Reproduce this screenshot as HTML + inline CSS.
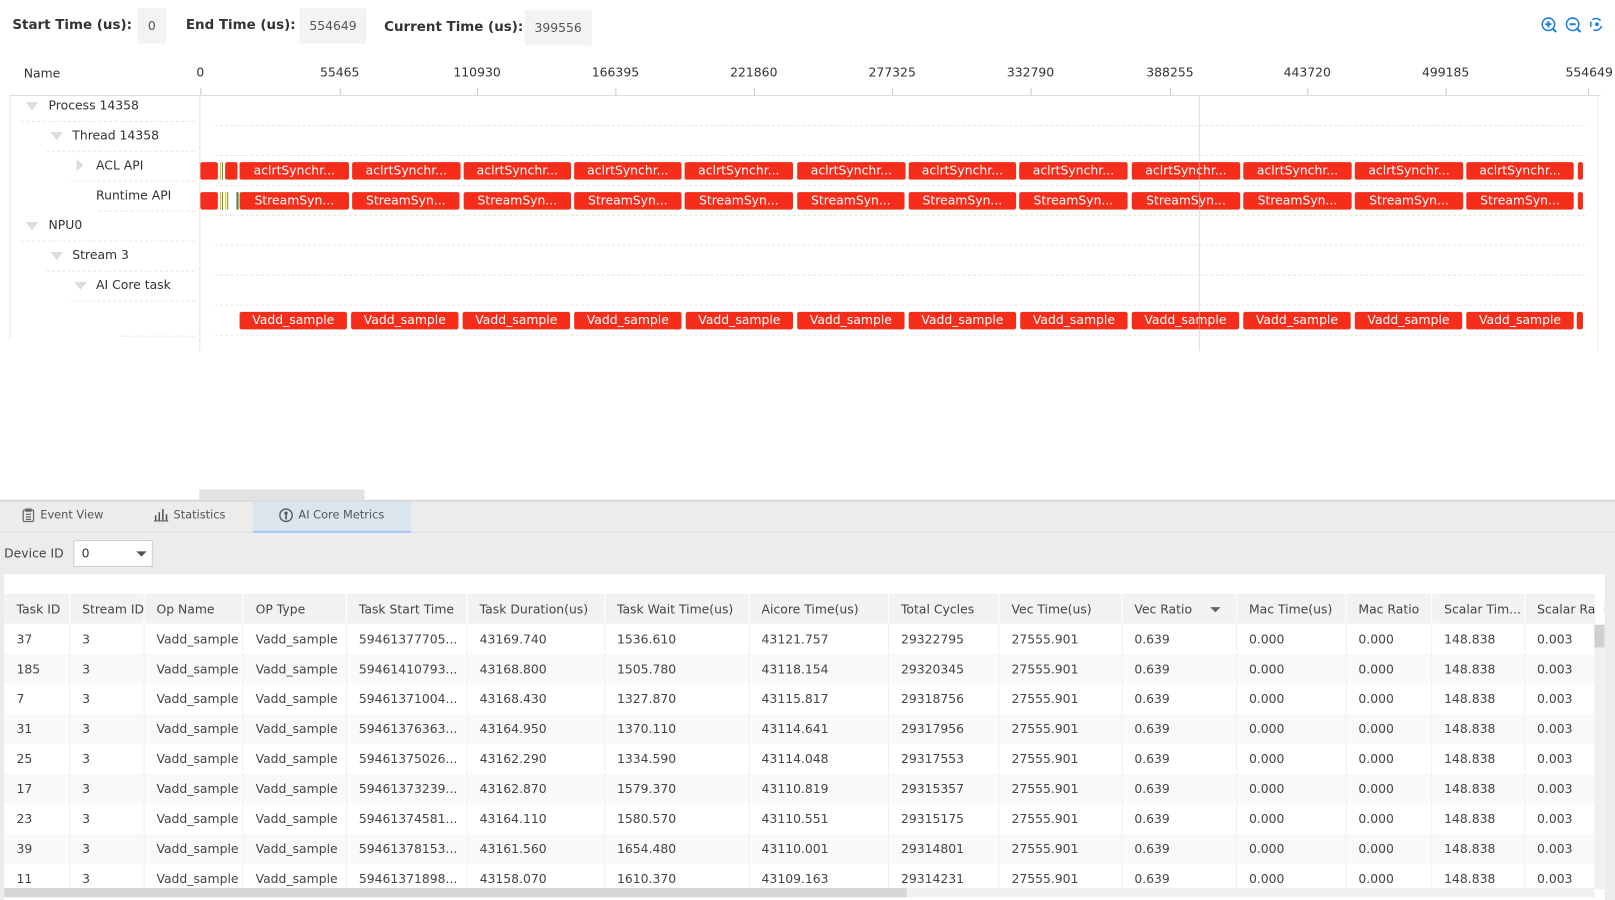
<!DOCTYPE html>
<html><head><meta charset="utf-8"><style>
*{margin:0;padding:0;box-sizing:border-box}
html,body{width:1615px;height:900px;overflow:hidden;background:#fff}
#r{position:absolute;left:0;top:0;width:1564px;height:872px;transform:scale(1.03261);transform-origin:0 0;font-family:"DejaVu Sans","Liberation Sans",sans-serif;color:#333}
.a{position:absolute}
.lb{font-weight:bold;font-size:13px;color:#333;top:17px}
.bx{background:#f3f3f3;font-size:12px;color:#555;text-align:center;line-height:34px;height:34px}
.tk{font-size:12px;color:#333;top:63px;transform:translateX(-50%)}
.tm{width:1px;height:7px;background:#ccc;top:85px}
.tr{font-size:12px;color:#333}
.tri{width:0;height:0;border-left:6px solid transparent;border-right:6px solid transparent;border-top:8px solid #ddd}
.ds{height:0;border-top:1px dashed #e6e6e6}
.b{background:#f52d1b;height:17px;border-radius:2px;color:#fff;font-size:12px;line-height:17px;text-align:center;overflow:hidden;white-space:nowrap}
.g{width:1px;height:17px}
table{border-collapse:collapse;table-layout:fixed;font-size:12px;color:#444}
td,th{height:29px;padding-left:12px;white-space:nowrap;overflow:hidden;text-align:left;font-weight:normal}
th{background:#f2f2f2;border-right:1px solid #fff;color:#444}
td{border-right:1px solid #f0f0f0}
tr:nth-child(odd) td{background:#f9f9f9}
</style></head><body><div id="r">
<div class="a lb" style="left:12px">Start Time (us):</div>
<div class="a bx" style="left:133px;top:8px;width:28px">0</div>
<div class="a lb" style="left:180px">End Time (us):</div>
<div class="a bx" style="left:290px;top:8px;width:65px">554649</div>
<div class="a lb" style="left:372px;top:19px">Current Time (us):</div>
<div class="a bx" style="left:508px;top:10px;width:65px">399556</div>
<svg class="a" style="left:1492px;top:16px" width="64" height="17" viewBox="0 0 64 17" fill="none" stroke="#1a7fe0" stroke-width="1.5">
<circle cx="7.5" cy="7.5" r="6"/><path d="M12 12l3 3M4.5 7.5h6M7.5 4.5v6" stroke-width="2"/>
<circle cx="31" cy="7.5" r="6"/><path d="M35.5 12l3 3M28 7.5h6" stroke-width="2"/>
<path d="M50 3a6 6 0 0 1 8 1M59 9a6 6 0 0 1-8 4M49 10a6 6 0 0 1 0-5"/><circle cx="54.5" cy="7.5" r="1.8" fill="#1a7fe0" stroke="none"/>
</svg>
<div class="a" style="left:23px;top:64px;font-size:12px">Name</div>
<div class="a tk" style="left:194px">0</div><div class="a tk" style="left:329px">55465</div><div class="a tk" style="left:462px">110930</div><div class="a tk" style="left:596px">166395</div><div class="a tk" style="left:730px">221860</div><div class="a tk" style="left:864px">277325</div><div class="a tk" style="left:998px">332790</div><div class="a tk" style="left:1133px">388255</div><div class="a tk" style="left:1266px">443720</div><div class="a tk" style="left:1400px">499185</div><div class="a tk" style="left:1539px">554649</div>
<div class="a tm" style="left:194px"></div><div class="a tm" style="left:329px"></div><div class="a tm" style="left:462px"></div><div class="a tm" style="left:596px"></div><div class="a tm" style="left:730px"></div><div class="a tm" style="left:864px"></div><div class="a tm" style="left:998px"></div><div class="a tm" style="left:1133px"></div><div class="a tm" style="left:1266px"></div><div class="a tm" style="left:1400px"></div><div class="a tm" style="left:1538px"></div>
<div class="a" style="left:9px;top:92px;width:1541px;height:1px;background:#ddd"></div>
<div class="a" style="left:9px;top:92px;width:1px;height:237px;background:#e6e6e6"></div>
<div class="a" style="left:193px;top:92px;width:1px;height:248px;background:#e6e6e6"></div>
<div class="a" style="left:1547px;top:93px;width:1px;height:247px;background:#eee"></div>
<div class="a tri" style="left:25px;top:99px"></div><div class="a tr" style="left:47px;top:95px">Process 14358</div>
<div class="a tri" style="left:49px;top:128px"></div><div class="a tr" style="left:70px;top:124px">Thread 14358</div>
<div class="a" style="left:74px;top:154px;width:0;height:0;border-top:6px solid transparent;border-bottom:6px solid transparent;border-left:7px solid #ddd"></div><div class="a tr" style="left:93px;top:153px">ACL API</div>
<div class="a tr" style="left:93px;top:182px">Runtime API</div>
<div class="a tri" style="left:25px;top:215px"></div><div class="a tr" style="left:47px;top:211px">NPU0</div>
<div class="a tri" style="left:49px;top:244px"></div><div class="a tr" style="left:70px;top:240px">Stream 3</div>
<div class="a tri" style="left:72px;top:273px"></div><div class="a tr" style="left:93px;top:269px">AI Core task</div>
<div class="a ds" style="left:208px;top:121px;width:1327px"></div>
<div class="a ds" style="left:208px;top:150px;width:1327px"></div>
<div class="a ds" style="left:208px;top:179px;width:1327px"></div>
<div class="a ds" style="left:208px;top:208px;width:1327px"></div>
<div class="a ds" style="left:208px;top:237px;width:1327px"></div>
<div class="a ds" style="left:208px;top:266px;width:1327px"></div>
<div class="a ds" style="left:208px;top:295px;width:1327px"></div>
<div class="a ds" style="left:208px;top:324px;width:1327px"></div>
<div class="a ds" style="left:21px;top:117px;width:167px"></div>
<div class="a ds" style="left:45px;top:146px;width:143px"></div>
<div class="a ds" style="left:69px;top:175px;width:120px"></div>
<div class="a ds" style="left:96px;top:204px;width:93px"></div>
<div class="a ds" style="left:21px;top:233px;width:167px"></div>
<div class="a ds" style="left:45px;top:262px;width:143px"></div>
<div class="a ds" style="left:69px;top:291px;width:120px"></div>
<div class="a ds" style="left:116px;top:325px;width:73px"></div>
<div class="a" style="left:0;top:157px">
<div class="a b" style="left:194px;width:17px"></div>
<div class="a g" style="left:213px;background:#e8c010"></div><div class="a g" style="left:215px;background:#6a9a20"></div>
<div class="a b" style="left:218px;width:12px"></div>
<div class="a b" style="left:232px;width:106px">aclrtSynchr...</div>
<div class="a b" style="left:341px;width:105px">aclrtSynchr...</div>
<div class="a b" style="left:449px;width:104px">aclrtSynchr...</div>
<div class="a b" style="left:556px;width:104px">aclrtSynchr...</div>
<div class="a b" style="left:663px;width:105px">aclrtSynchr...</div>
<div class="a b" style="left:772px;width:105px">aclrtSynchr...</div>
<div class="a b" style="left:880px;width:104px">aclrtSynchr...</div>
<div class="a b" style="left:987px;width:105px">aclrtSynchr...</div>
<div class="a b" style="left:1096px;width:105px">aclrtSynchr...</div>
<div class="a b" style="left:1204px;width:105px">aclrtSynchr...</div>
<div class="a b" style="left:1312px;width:105px">aclrtSynchr...</div>
<div class="a b" style="left:1420px;width:104px">aclrtSynchr...</div>
<div class="a b" style="left:1528px;width:5px"></div>
</div>
<div class="a" style="left:0;top:186px">
<div class="a b" style="left:194px;width:17px"></div>
<div class="a g" style="left:213px;background:#e8c010"></div><div class="a g" style="left:215px;background:#6a9a20"></div><div class="a g" style="left:218px;background:#e8c010"></div><div class="a g" style="left:220px;background:#6a9a20"></div><div class="a g" style="left:229px;background:#4a8a20;width:2px"></div>
<div class="a b" style="left:232px;width:106px">StreamSyn...</div>
<div class="a b" style="left:341px;width:104px">StreamSyn...</div>
<div class="a b" style="left:449px;width:104px">StreamSyn...</div>
<div class="a b" style="left:556px;width:104px">StreamSyn...</div>
<div class="a b" style="left:663px;width:105px">StreamSyn...</div>
<div class="a b" style="left:772px;width:104px">StreamSyn...</div>
<div class="a b" style="left:880px;width:104px">StreamSyn...</div>
<div class="a b" style="left:987px;width:105px">StreamSyn...</div>
<div class="a b" style="left:1096px;width:105px">StreamSyn...</div>
<div class="a b" style="left:1204px;width:105px">StreamSyn...</div>
<div class="a b" style="left:1312px;width:105px">StreamSyn...</div>
<div class="a b" style="left:1420px;width:104px">StreamSyn...</div>
<div class="a b" style="left:1528px;width:5px"></div>
</div>
<div class="a" style="left:0;top:302px">
<div class="a b" style="left:232px;width:104px">Vadd_sample</div>
<div class="a b" style="left:340px;width:104px">Vadd_sample</div>
<div class="a b" style="left:448px;width:104px">Vadd_sample</div>
<div class="a b" style="left:556px;width:104px">Vadd_sample</div>
<div class="a b" style="left:664px;width:104px">Vadd_sample</div>
<div class="a b" style="left:772px;width:104px">Vadd_sample</div>
<div class="a b" style="left:880px;width:104px">Vadd_sample</div>
<div class="a b" style="left:988px;width:104px">Vadd_sample</div>
<div class="a b" style="left:1096px;width:104px">Vadd_sample</div>
<div class="a b" style="left:1204px;width:104px">Vadd_sample</div>
<div class="a b" style="left:1312px;width:104px">Vadd_sample</div>
<div class="a b" style="left:1420px;width:104px">Vadd_sample</div>
<div class="a b" style="left:1527px;width:6px"></div>
</div>
<div class="a" style="left:1161px;top:93px;width:1px;height:247px;background:rgba(200,200,200,.6)"></div>
<div class="a" style="left:193px;top:474px;width:160px;height:10px;background:#e2e2e2"></div>
<div class="a" style="left:0;top:484px;width:1564px;height:388px;background:#ececec"></div>
<div class="a" style="left:0;top:484px;width:1564px;height:2px;background:#dadada"></div>
<div class="a" style="left:0;top:515px;width:1564px;height:1px;background:#dadada"></div>
<div class="a" style="left:245px;top:486px;width:153px;height:30px;background:#dbe5ee;border-bottom:2px solid #9fcbf5"></div>
<svg class="a" style="left:21px;top:492px" width="13" height="14" viewBox="0 0 13 14" fill="none" stroke="#666" stroke-width="1.2"><rect x="1.5" y="2" width="10" height="11" rx="1"/><path d="M4 1h5v2H4zM4 6h5M4 8.5h5M4 11h5"/></svg>
<div class="a" style="left:39px;top:492px;font-size:11px;color:#555">Event View</div>
<svg class="a" style="left:149px;top:492px" width="14" height="13" viewBox="0 0 14 13" fill="#555"><rect x="0" y="12" width="14" height="1"/><rect x="1" y="7" width="1.5" height="5"/><rect x="4.5" y="4" width="1.5" height="8"/><rect x="8" y="1" width="1.5" height="11"/><rect x="11.5" y="6" width="1.5" height="6"/></svg>
<div class="a" style="left:168px;top:492px;font-size:11px;color:#555">Statistics</div>
<svg class="a" style="left:270px;top:492px" width="14" height="14" viewBox="0 0 14 14"><circle cx="7" cy="7" r="6" fill="none" stroke="#555" stroke-width="1.3"/><circle cx="7" cy="5" r="1.6" fill="#555"/><rect x="6.2" y="6.5" width="1.6" height="4.5" fill="#555"/></svg>
<div class="a" style="left:289px;top:492px;font-size:11px;color:#555">AI Core Metrics</div>
<div class="a" style="left:4px;top:529px;font-size:12px;color:#444">Device ID</div>
<div class="a" style="left:71px;top:523px;width:77px;height:26px;background:#fff;border:1px solid #ccc;font-size:12px;line-height:24px;padding-left:7px;color:#333">0<div class="a" style="left:60px;top:10px;width:0;height:0;border-left:5px solid transparent;border-right:5px solid transparent;border-top:5px solid #555"></div></div>
<div class="a" style="left:4px;top:556px;width:1550px;height:316px;background:#fff;overflow:hidden">
<table class="a" style="left:0;top:19px;width:1640px">
<colgroup><col style="width:63px"><col style="width:72px"><col style="width:96px"><col style="width:100px"><col style="width:117px"><col style="width:133px"><col style="width:140px"><col style="width:135px"><col style="width:107px"><col style="width:119px"><col style="width:111px"><col style="width:106px"><col style="width:83px"><col style="width:90px"><col style="width:268px"></colgroup>
<tr><th>Task ID</th><th>Stream ID</th><th>Op Name</th><th>OP Type</th><th>Task Start Time</th><th>Task Duration(us)</th><th>Task Wait Time(us)</th><th>Aicore Time(us)</th><th>Total Cycles</th><th>Vec Time(us)</th><th>Vec Ratio <span style="display:inline-block;margin-left:14px;width:0;height:0;border-left:5px solid transparent;border-right:5px solid transparent;border-top:5px solid #666;vertical-align:middle"></span></th><th>Mac Time(us)</th><th>Mac Ratio</th><th>Scalar Tim...</th><th>Scalar Ratio</th></tr>
<tr><td>37</td><td>3</td><td>Vadd_sample</td><td>Vadd_sample</td><td>59461377705...</td><td>43169.740</td><td>1536.610</td><td>43121.757</td><td>29322795</td><td>27555.901</td><td>0.639</td><td>0.000</td><td>0.000</td><td>148.838</td><td>0.003</td></tr>
<tr><td>185</td><td>3</td><td>Vadd_sample</td><td>Vadd_sample</td><td>59461410793...</td><td>43168.800</td><td>1505.780</td><td>43118.154</td><td>29320345</td><td>27555.901</td><td>0.639</td><td>0.000</td><td>0.000</td><td>148.838</td><td>0.003</td></tr>
<tr><td>7</td><td>3</td><td>Vadd_sample</td><td>Vadd_sample</td><td>59461371004...</td><td>43168.430</td><td>1327.870</td><td>43115.817</td><td>29318756</td><td>27555.901</td><td>0.639</td><td>0.000</td><td>0.000</td><td>148.838</td><td>0.003</td></tr>
<tr><td>31</td><td>3</td><td>Vadd_sample</td><td>Vadd_sample</td><td>59461376363...</td><td>43164.950</td><td>1370.110</td><td>43114.641</td><td>29317956</td><td>27555.901</td><td>0.639</td><td>0.000</td><td>0.000</td><td>148.838</td><td>0.003</td></tr>
<tr><td>25</td><td>3</td><td>Vadd_sample</td><td>Vadd_sample</td><td>59461375026...</td><td>43162.290</td><td>1334.590</td><td>43114.048</td><td>29317553</td><td>27555.901</td><td>0.639</td><td>0.000</td><td>0.000</td><td>148.838</td><td>0.003</td></tr>
<tr><td>17</td><td>3</td><td>Vadd_sample</td><td>Vadd_sample</td><td>59461373239...</td><td>43162.870</td><td>1579.370</td><td>43110.819</td><td>29315357</td><td>27555.901</td><td>0.639</td><td>0.000</td><td>0.000</td><td>148.838</td><td>0.003</td></tr>
<tr><td>23</td><td>3</td><td>Vadd_sample</td><td>Vadd_sample</td><td>59461374581...</td><td>43164.110</td><td>1580.570</td><td>43110.551</td><td>29315175</td><td>27555.901</td><td>0.639</td><td>0.000</td><td>0.000</td><td>148.838</td><td>0.003</td></tr>
<tr><td>39</td><td>3</td><td>Vadd_sample</td><td>Vadd_sample</td><td>59461378153...</td><td>43161.560</td><td>1654.480</td><td>43110.001</td><td>29314801</td><td>27555.901</td><td>0.639</td><td>0.000</td><td>0.000</td><td>148.838</td><td>0.003</td></tr>
<tr><td>11</td><td>3</td><td>Vadd_sample</td><td>Vadd_sample</td><td>59461371898...</td><td>43158.070</td><td>1610.370</td><td>43109.163</td><td>29314231</td><td>27555.901</td><td>0.639</td><td>0.000</td><td>0.000</td><td>148.838</td><td>0.003</td></tr>
</table>
<div class="a" style="left:1541px;top:0;width:9px;height:316px;background:#fff"></div>
<div class="a" style="left:1540px;top:49px;width:10px;height:256px;background:#f0f0f0"></div>
<div class="a" style="left:1540px;top:49px;width:10px;height:22px;background:#d0d0d0"></div>
<div class="a" style="left:0;top:304px;width:1540px;height:9px;background:#f0f0f0"></div>
<div class="a" style="left:0;top:304px;width:874px;height:9px;background:#d6d6d6"></div>
</div>
</div></body></html>
